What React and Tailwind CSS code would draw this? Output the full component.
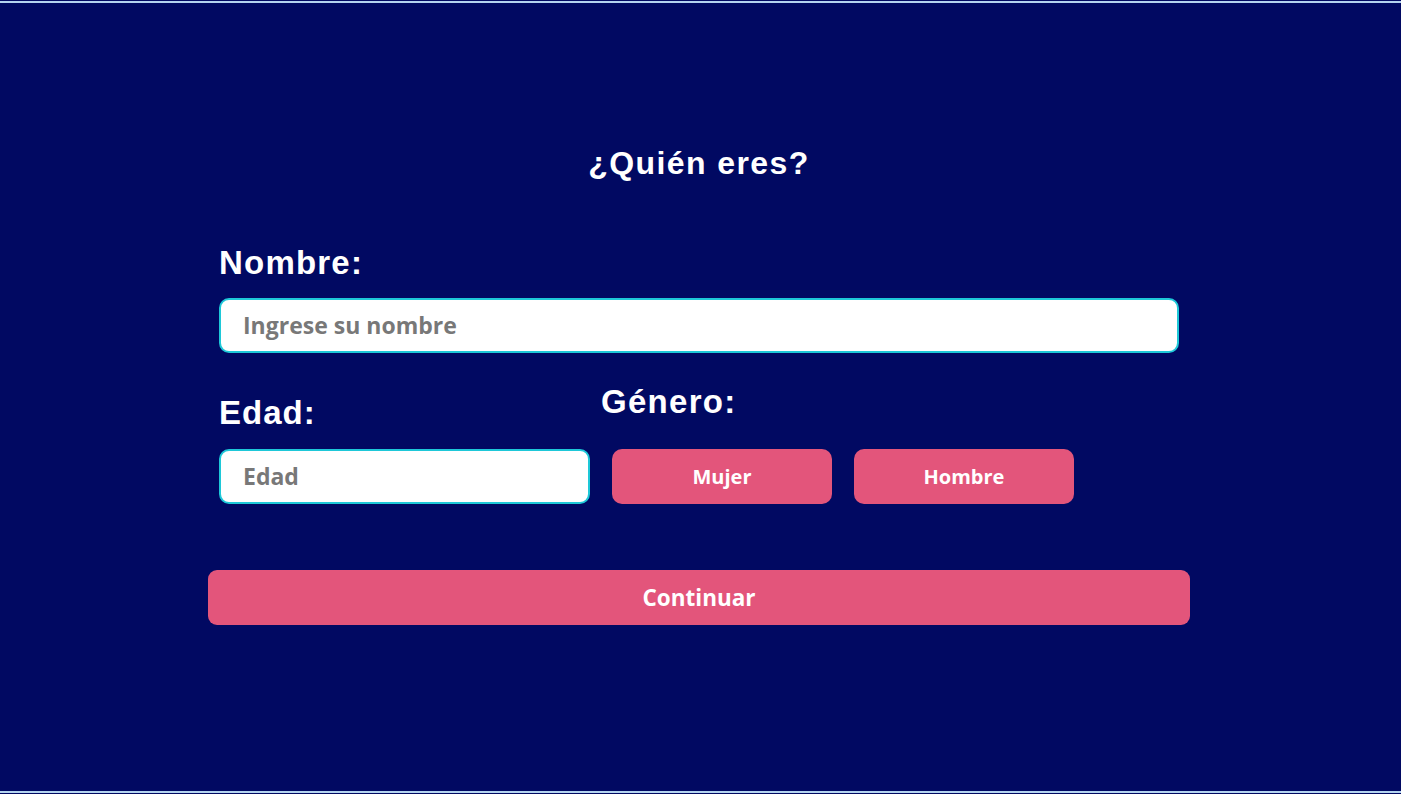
export default function App() {
  const cond = { fontFamily: '"Open Sans", "Noto Sans", sans-serif' };
  return (
    <div className="w-[1401px] h-[794px] bg-[#010962] flex flex-col" style={{ fontFamily: '"Liberation Sans", Arial, sans-serif' }}>
      <div className="h-[1px] shrink-0" />
      <div className="h-[2px] shrink-0 bg-[#b4d4f0]" />
      <div className="flex-1 flex flex-col">
        <div className="ml-[208px] w-[982px] flex flex-col">
          <h1 className="mt-[140px] h-[40px] leading-[40px] text-[32px] tracking-[1.4px] font-bold text-white text-center whitespace-nowrap">¿Quién eres?</h1>
          <div className="px-[11px] mt-[60px]">
            <label className="block h-[40px] leading-[40px] text-[33px] tracking-[1.2px] font-bold text-white">Nombre:</label>
            <div className="mt-[15px] h-[55px] w-[960px] bg-white border-2 border-[#1ec8d8] rounded-[10px] flex items-center pl-[22px]">
              <span className="text-[23px] font-bold text-[#787878]" style={cond}>Ingrese su nombre</span>
            </div>
            <div className="mt-[29px] flex gap-[11px]">
              <div className="w-[371px] flex flex-col">
                <label className="block mt-[11px] h-[40px] leading-[40px] text-[33px] tracking-[1px] font-bold text-white">Edad:</label>
                <div className="mt-[16px] h-[55px] w-[371px] bg-white border-2 border-[#1ec8d8] rounded-[10px] flex items-center pl-[22px]">
                  <span className="text-[23px] font-bold text-[#787878]" style={cond}>Edad</span>
                </div>
              </div>
              <div className="flex flex-col">
                <label className="block h-[40px] leading-[40px] text-[33px] tracking-[1.3px] font-bold text-white">Género:</label>
                <div className="mt-[27px] ml-[11px] flex gap-[22px]">
                  <button className="w-[220px] h-[55px] rounded-[10px] bg-[#e3557b] text-white text-[20px] font-bold" style={cond}>Mujer</button>
                  <button className="w-[220px] h-[55px] rounded-[10px] bg-[#e3557b] text-white text-[20px] font-bold" style={cond}>Hombre</button>
                </div>
              </div>
            </div>
          </div>
          <button className="mt-[66px] w-[982px] h-[55px] rounded-[9px] bg-[#e3557b] text-white text-[22.5px] font-bold" style={cond}>Continuar</button>
        </div>
      </div>
      <div className="h-[2px] shrink-0 bg-[#b4d4f0]" />
      <div className="h-[1px] shrink-0" />
    </div>
  );
}
